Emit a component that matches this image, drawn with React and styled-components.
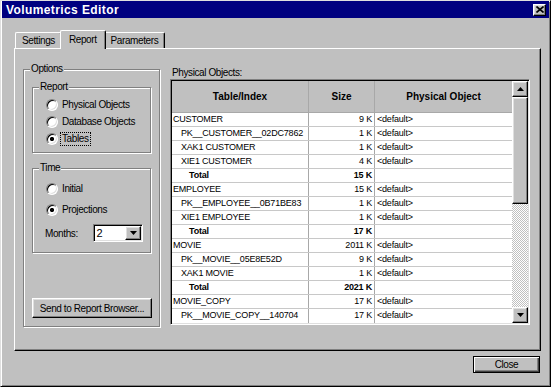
import React from "react";
import styled, { createGlobalStyle } from "styled-components";

const GlobalStyle = createGlobalStyle`
  html, body {
    margin: 0;
    padding: 0;
    background: #c0c0c0;
  }
  body {
    font-family: "Liberation Sans", Arial, sans-serif;
    font-size: 10px;
    color: #000;
  }
`;

const rows = [
  { name: "CUSTOMER", size: "9 K", object: "<default>", level: 0 },
  { name: "PK__CUSTOMER__02DC7862", size: "1 K", object: "<default>", level: 1 },
  { name: "XAK1 CUSTOMER", size: "1 K", object: "<default>", level: 1 },
  { name: "XIE1 CUSTOMER", size: "4 K", object: "<default>", level: 1 },
  { name: "Total", size: "15 K", object: "", level: 2 },
  { name: "EMPLOYEE", size: "15 K", object: "<default>", level: 0 },
  { name: "PK__EMPLOYEE__0B71BE83", size: "1 K", object: "<default>", level: 1 },
  { name: "XIE1 EMPLOYEE", size: "1 K", object: "<default>", level: 1 },
  { name: "Total", size: "17 K", object: "", level: 2 },
  { name: "MOVIE", size: "2011 K", object: "<default>", level: 0 },
  { name: "PK__MOVIE__05E8E52D", size: "9 K", object: "<default>", level: 1 },
  { name: "XAK1 MOVIE", size: "1 K", object: "<default>", level: 1 },
  { name: "Total", size: "2021 K", object: "", level: 2 },
  { name: "MOVIE_COPY", size: "17 K", object: "<default>", level: 0 },
  { name: "PK__MOVIE_COPY__140704", size: "17 K", object: "<default>", level: 1 },
];

const indent = [1, 9, 17];

function Arrow({ up }) {
  return (
    <svg width="7" height="4" viewBox="0 0 7 4">
      <polygon points={up ? "3.5,0 7,4 0,4" : "0,0 7,0 3.5,4"} fill="#000" />
    </svg>
  );
}

function App() {
  return (
    <>
      <GlobalStyle />
      <Window>
        <TitleBar>
          <Title>Volumetrics Editor</Title>
          <TitleButton>
            <svg width="8" height="7" viewBox="0 0 8 7">
              <path d="M0.5 0.5 L7.5 6.5 M7.5 0.5 L0.5 6.5" stroke="#000" strokeWidth="1.6" />
            </svg>
          </TitleButton>
        </TitleBar>

        <Body>
          <TabRow>
            <Tab>Settings</Tab>
            <Tab $active>Report</Tab>
            <Tab>Parameters</Tab>
          </TabRow>

          <Panel>
            <GroupBox $pad="6px 8px 8px 7px">
              <Legend>Options</Legend>
              <GroupBox $pad="3px 7px 5px 7px" style={{ marginLeft: 1 }}>
                <Legend>Report</Legend>
                <RadioRow>
                  <RadioMark />
                  <RadioLabel>Physical Objects</RadioLabel>
                </RadioRow>
                <RadioRow>
                  <RadioMark />
                  <RadioLabel>Database Objects</RadioLabel>
                </RadioRow>
                <RadioRow>
                  <RadioMark $checked />
                  <RadioLabel $focused>Tables</RadioLabel>
                </RadioRow>
              </GroupBox>

              <GroupBox $pad="6px 7px 10px 7px" $top={9} style={{ marginLeft: 1 }}>
                <Legend>Time</Legend>
                <RadioRow>
                  <RadioMark />
                  <RadioLabel>Initial</RadioLabel>
                </RadioRow>
                <RadioRow $gap={4}>
                  <RadioMark $checked />
                  <RadioLabel>Projections</RadioLabel>
                </RadioRow>
                <MonthsRow>
                  <MonthsLabel>Months:</MonthsLabel>
                  <Combo>
                    <ComboField>2</ComboField>
                    <ComboButton>
                      <Arrow />
                    </ComboButton>
                  </Combo>
                </MonthsRow>
              </GroupBox>

              <PushButton>Send to Report Browser...</PushButton>
            </GroupBox>

            <ObjectsColumn>
              <FieldLabel>Physical Objects:</FieldLabel>
              <GridFrame>
                <GridData>
                  <HeaderRow>
                    <HeaderCell>Table/Index</HeaderCell>
                    <HeaderCell>Size</HeaderCell>
                    <HeaderCell $last>Physical Object</HeaderCell>
                  </HeaderRow>
                  {rows.map((r, i) => (
                    <DataRow key={i} $last={i === rows.length - 1}>
                      <Cell $pad={indent[r.level]} $bold={r.level === 2}>
                        {r.name}
                      </Cell>
                      <Cell $right $bold={r.level === 2}>
                        {r.size}
                      </Cell>
                      <Cell $pad={2} $last>
                        {r.object}
                      </Cell>
                    </DataRow>
                  ))}
                </GridData>
                <ScrollBar>
                  <ScrollButton>
                    <Arrow up />
                  </ScrollButton>
                  <ScrollThumb />
                  <ScrollTrack />
                  <ScrollButton>
                    <Arrow />
                  </ScrollButton>
                </ScrollBar>
              </GridFrame>
            </ObjectsColumn>
          </Panel>

          <Footer>
            <CloseButton>Close</CloseButton>
          </Footer>
        </Body>
      </Window>
    </>
  );
}

const raised = `
  border: 1px solid;
  border-color: #fff #000 #000 #fff;
  box-shadow: inset -1px -1px #808080, inset 1px 1px #dfdfdf;
  background: #c0c0c0;
`;

const Window = styled.div`
  width: 551px;
  height: 387px;
  box-sizing: border-box;
  border: 1px solid;
  border-color: #dfdfdf #000 #000 #dfdfdf;
  box-shadow: inset 1px 1px #fff, inset -1px -1px #808080;
  padding: 0 1px;
  display: flex;
  flex-direction: column;
  background: #c0c0c0;
`;

const TitleBar = styled.div`
  height: 17px;
  flex: none;
  background: #000080;
  display: flex;
  align-items: center;
  justify-content: space-between;
  padding: 0 3px 0 4px;
`;

const Title = styled.span`
  color: #fff;
  font-weight: bold;
  font-size: 12px;
  letter-spacing: 0.4px;
`;

const TitleButton = styled.div`
  ${raised}
  box-sizing: border-box;
  width: 13px;
  height: 12px;
  display: flex;
  align-items: center;
  justify-content: center;
`;

const Body = styled.div`
  display: flex;
  flex-direction: column;
  padding: 12px 8px 0 12px;
`;

const TabRow = styled.div`
  display: flex;
  align-items: flex-end;
  height: 18px;
  padding-left: 1px;
  position: relative;
  z-index: 1;
`;

const Tab = styled.div`
  box-sizing: border-box;
  height: ${(p) => (p.$active ? 19 : 16)}px;
  margin: 0 ${(p) => (p.$active ? -2 : 0)}px ${(p) => (p.$active ? -1 : 0)}px;
  padding: 0 ${(p) => (p.$active ? 8 : 6)}px ${(p) => (p.$active ? 2 : 0)}px;
  display: flex;
  align-items: center;
  background: #c0c0c0;
  border-top: 1px solid #fff;
  border-left: 1px solid #fff;
  border-right: 1px solid #000;
  box-shadow: inset -1px 0 #808080;
  border-radius: 2px 2px 0 0;
  letter-spacing: -0.4px;
  position: relative;
  z-index: ${(p) => (p.$active ? 1 : 0)};
`;

const Panel = styled.div`
  box-sizing: border-box;
  height: 303px;
  border: 1px solid;
  border-color: #fff #000 #000 #fff;
  box-shadow: inset -1px -1px #808080;
  padding: 14px 0 0 8px;
  display: grid;
  grid-template-columns: 137px 360px;
  column-gap: 10px;
  align-items: start;
`;

const GroupBox = styled.fieldset`
  margin: ${(p) => p.$top || 0}px 0 0 0;
  min-width: 0;
  padding: ${(p) => p.$pad};
  border: 1px solid #808080;
  box-shadow: inset 1px 1px #fff, 1px 1px #fff;
  display: flex;
  flex-direction: column;
`;

const Legend = styled.legend`
  font-size: 10px;
  line-height: 12px;
  padding: 0 1px;
  margin-left: -1px;
  background: #c0c0c0;
  letter-spacing: -0.4px;
`;

const RadioRow = styled.div`
  display: flex;
  align-items: center;
  gap: 2px;
  height: 17px;
  margin: ${(p) => p.$gap || 0}px 0 0 6px;
`;

const RadioMark = styled.span`
  flex: none;
  width: 12px;
  height: 12px;
  box-sizing: border-box;
  border-radius: 50%;
  border: 1px solid;
  border-color: #808080 #fff #fff #808080;
  box-shadow: inset 1px 1px #000, inset -1px -1px #dfdfdf;
  background: ${(p) =>
    p.$checked
      ? "radial-gradient(circle, #000 0 1.8px, #fff 2.4px)"
      : "#fff"};
`;

const RadioLabel = styled.span`
  line-height: 12px;
  padding: 0 1px;
  border: 1px ${(p) => (p.$focused ? "dotted #000" : "solid transparent")};
  letter-spacing: -0.4px;
`;

const MonthsRow = styled.div`
  display: flex;
  align-items: center;
  margin: 6px 0 0 5px;
`;

const MonthsLabel = styled.span`
  width: 48px;
  letter-spacing: -0.4px;
`;

const Combo = styled.div`
  box-sizing: border-box;
  width: 51px;
  height: 18px;
  border: 1px solid;
  border-color: #808080 #fff #fff #808080;
  box-shadow: inset 1px 1px #000, inset -1px -1px #dfdfdf;
  padding: 1px;
  background: #fff;
  display: flex;
`;

const ComboField = styled.span`
  flex: 1;
  padding-left: 2px;
  line-height: 14px;
  font-size: 11px;
`;

const ComboButton = styled.div`
  ${raised}
  box-sizing: border-box;
  width: 16px;
  display: flex;
  align-items: center;
  justify-content: center;
`;

const PushButton = styled.div`
  ${raised}
  box-sizing: border-box;
  width: 120px;
  height: 20px;
  margin: 45px 0 0 1px;
  display: flex;
  align-items: center;
  justify-content: center;
  letter-spacing: -0.4px;
`;

const ObjectsColumn = styled.div`
  display: flex;
  flex-direction: column;
`;

const FieldLabel = styled.div`
  margin-top: 4px;
  line-height: 12px;
  padding-left: 2px;
  letter-spacing: -0.4px;
`;

const GridFrame = styled.div`
  box-sizing: border-box;
  width: 360px;
  height: 246px;
  border: 1px solid;
  border-color: #808080 #fff #fff #808080;
  box-shadow: inset 1px 1px #000, inset -1px -1px #dfdfdf;
  padding: 1px;
  background: #fff;
  display: grid;
  grid-template-columns: 1fr 16px;
`;

const GridData = styled.div`
  display: flex;
  flex-direction: column;
  font-size: 9px;
`;

const columns = "137px 66px 1fr";

const HeaderRow = styled.div`
  display: grid;
  grid-template-columns: ${columns};
  height: 32px;
  box-sizing: border-box;
  border-bottom: 1px solid #a8a8a8;
  background: #c0c0c0;
`;

const HeaderCell = styled.div`
  display: flex;
  align-items: center;
  justify-content: center;
  font-weight: bold;
  font-size: 10px;
  border-right: ${(p) => (p.$last ? "none" : "1px solid #a8a8a8")};
`;

const DataRow = styled.div`
  display: grid;
  grid-template-columns: ${columns};
  height: 14px;
  box-sizing: border-box;
  border-bottom: ${(p) => (p.$last ? "none" : "1px solid #c8c8c8")};
`;

const Cell = styled.div`
  line-height: 13px;
  white-space: nowrap;
  overflow: hidden;
  padding: 0 ${(p) => (p.$right ? 2 : 0)}px 0 ${(p) => p.$pad || 0}px;
  text-align: ${(p) => (p.$right ? "right" : "left")};
  font-weight: ${(p) => (p.$bold ? "bold" : "normal")};
  border-right: ${(p) => (p.$last ? "none" : "1px solid #a8a8a8")};
  letter-spacing: -0.2px;
`;

const ScrollBar = styled.div`
  display: flex;
  flex-direction: column;
`;

const ScrollButton = styled.div`
  ${raised}
  box-sizing: border-box;
  height: 16px;
  flex: none;
  display: flex;
  align-items: center;
  justify-content: center;
`;

const ScrollThumb = styled.div`
  ${raised}
  box-sizing: border-box;
  height: 107px;
  flex: none;
`;

const ScrollTrack = styled.div`
  flex: 1;
  background: repeating-conic-gradient(#fff 0 25%, #c0c0c0 0 50%) 0 0 / 2px 2px;
`;

const Footer = styled.div`
  display: flex;
  justify-content: flex-end;
  padding: 5px 1px 0 0;
`;

const CloseButton = styled.div`
  box-sizing: border-box;
  width: 67px;
  height: 17px;
  border: 1px solid #000;
  box-shadow: inset 1px 1px #fff, inset -1px -1px #404040, inset -2px -2px #808080;
  background: #c0c0c0;
  display: flex;
  align-items: center;
  justify-content: center;
  letter-spacing: -0.4px;
`;

export default App;
